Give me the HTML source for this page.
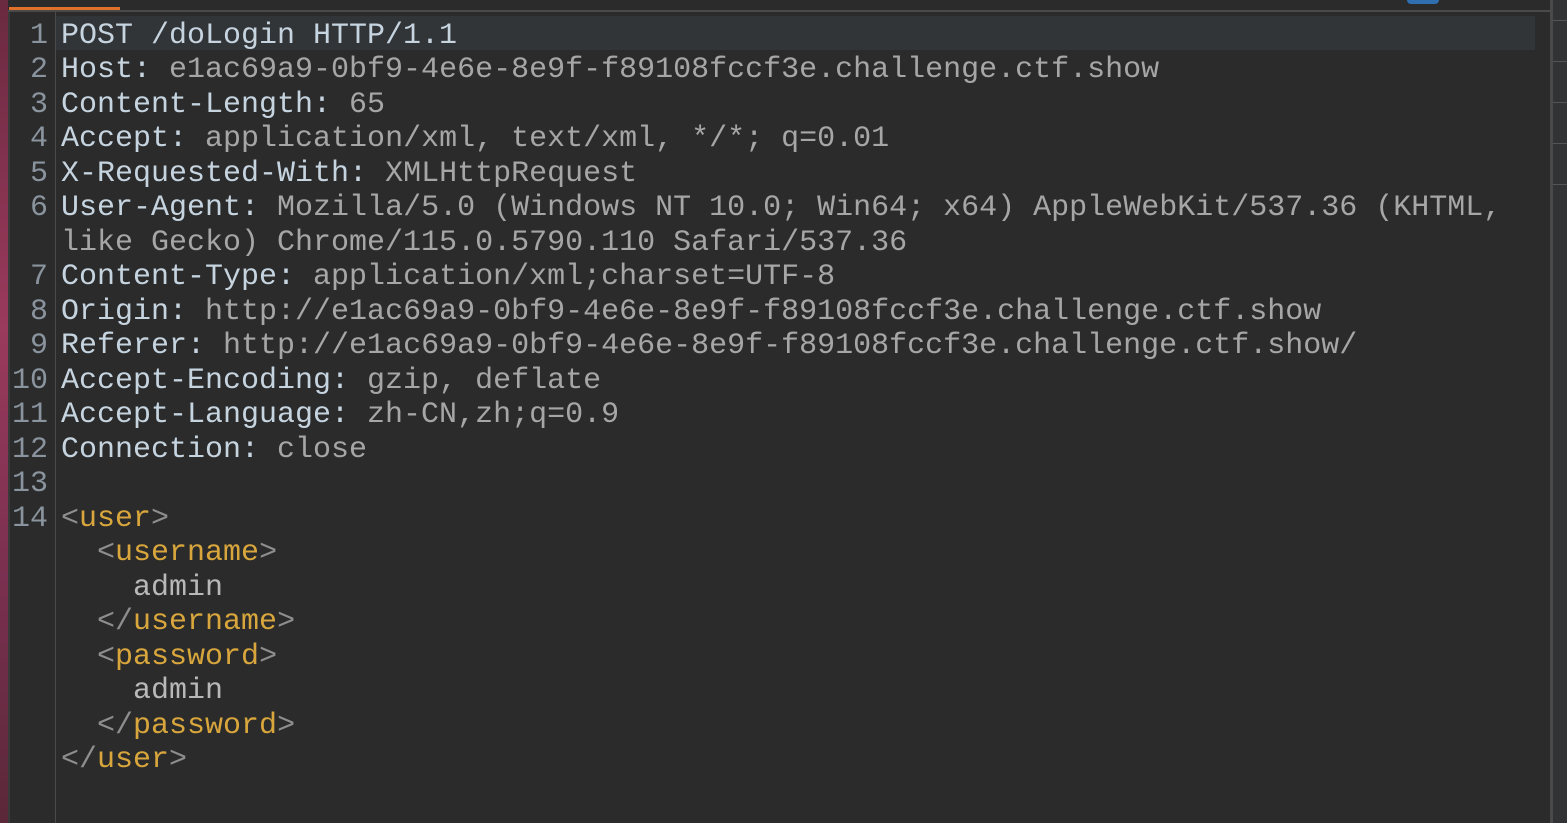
<!DOCTYPE html>
<html><head><meta charset="utf-8"><style>
html,body{margin:0;padding:0;width:1567px;height:823px;overflow:hidden;background:#2b2b2b;}
#strip{position:absolute;left:0;top:0;width:8px;height:823px;background:linear-gradient(#6a2a40,#9a3a5c 40%,#7a3050 70%,#5a2838);}
#topbar{position:absolute;left:8px;top:0;width:1545px;height:10px;background:#2b2b2b;}
#tabline{position:absolute;left:9px;top:7px;width:111px;height:3px;background:#e0702a;}
#blue{position:absolute;left:1407px;top:0;width:32px;height:4px;background:#2f6fb0;border-radius:0 0 10px 10px;}
#hline{position:absolute;left:8px;top:10px;width:1543px;height:2px;background:#4a4a4a;}
#gutter{position:absolute;left:8px;top:12px;width:47px;height:811px;background:#2b2b2b;border-left:2px solid #3a3a3a;}
#gline{position:absolute;left:55px;top:12px;width:1px;height:811px;background:#4a4a4a;}
#hl{position:absolute;left:56px;top:16px;width:1479px;height:34px;background:#323538;}
#vline{position:absolute;left:1550px;top:0;width:3px;height:823px;background:#4a4a4a;}
#rp{position:absolute;left:1553px;top:0;width:14px;height:823px;background:#313335;}
.tick{position:absolute;left:1553px;width:14px;height:1px;background:#555;}
pre{position:absolute;margin:0;top:18.5px;font-family:"Liberation Mono","Courier New",monospace;font-size:30px;line-height:34.5px;white-space:pre;}
#nums{left:8px;width:40px;text-align:right;color:#8a949e;}
#code{left:61px;color:#c6d4e0;}
.v{color:#a6a6a6}.t{color:#8e8e8e}.n{color:#d8a63c}.a{color:#b8b8b8}
</style></head><body>
<div id="strip"></div><div id="topbar"></div><div id="tabline"></div><div id="blue"></div><div id="hline"></div>
<div id="gutter"></div><div id="gline"></div><div id="hl"></div>
<div id="vline"></div><div id="rp"></div>
<div class="tick" style="top:20px"></div><div class="tick" style="top:61px"></div><div class="tick" style="top:102px"></div><div class="tick" style="top:143px"></div><div class="tick" style="top:184px"></div>
<pre id="nums">1
2
3
4
5
6

7
8
9
10
11
12
13
14</pre>
<pre id="code">POST /doLogin HTTP/1.1
Host:<span class="v"> e1ac69a9-0bf9-4e6e-8e9f-f89108fccf3e.challenge.ctf.show</span>
Content-Length:<span class="v"> 65</span>
Accept:<span class="v"> application/xml, text/xml, */*; q=0.01</span>
X-Requested-With:<span class="v"> XMLHttpRequest</span>
User-Agent:<span class="v"> Mozilla/5.0 (Windows NT 10.0; Win64; x64) AppleWebKit/537.36 (KHTML,
like Gecko) Chrome/115.0.5790.110 Safari/537.36</span>
Content-Type:<span class="v"> application/xml;charset=UTF-8</span>
Origin:<span class="v"> http://e1ac69a9-0bf9-4e6e-8e9f-f89108fccf3e.challenge.ctf.show</span>
Referer:<span class="v"> http://e1ac69a9-0bf9-4e6e-8e9f-f89108fccf3e.challenge.ctf.show/</span>
Accept-Encoding:<span class="v"> gzip, deflate</span>
Accept-Language:<span class="v"> zh-CN,zh;q=0.9</span>
Connection:<span class="v"> close</span>

<span class="t">&lt;</span><span class="n">user</span><span class="t">&gt;</span>
  <span class="t">&lt;</span><span class="n">username</span><span class="t">&gt;</span>
<span class="a">    admin</span>
  <span class="t">&lt;/</span><span class="n">username</span><span class="t">&gt;</span>
  <span class="t">&lt;</span><span class="n">password</span><span class="t">&gt;</span>
<span class="a">    admin</span>
  <span class="t">&lt;/</span><span class="n">password</span><span class="t">&gt;</span>
<span class="t">&lt;/</span><span class="n">user</span><span class="t">&gt;</span></pre>
</body></html>
